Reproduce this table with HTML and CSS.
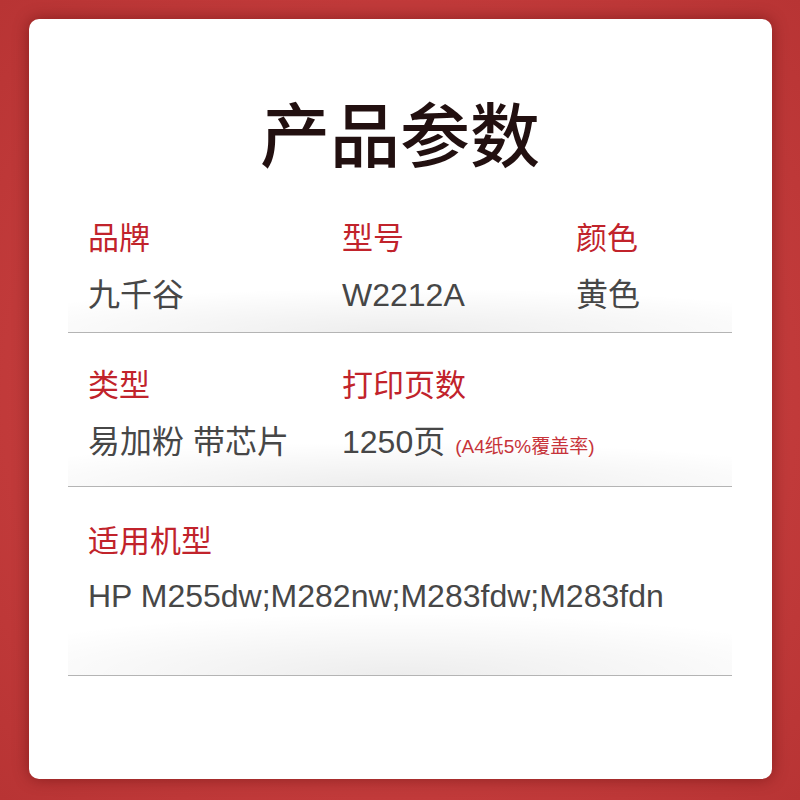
FILE: index.html
```html
<!DOCTYPE html>
<html lang="zh-CN">

<head>
	<meta charset="UTF-8">
	<meta name="viewport" content="width=device-width, initial-scale=1.0">
	<title>产品参数</title>
	<link rel="stylesheet" href="styles.css">
</head>

<body>
	<div class="page">
		<div class="card">
			<h1 class="title">产品参数</h1>

			<div class="spec-row row-1">
				<div class="cell">
					<div class="label">品牌</div>
					<div class="value">九千谷</div>
				</div>
				<div class="cell">
					<div class="label">型号</div>
					<div class="value">W2212A</div>
				</div>
				<div class="cell">
					<div class="label">颜色</div>
					<div class="value">黄色</div>
				</div>
			</div>

			<div class="spec-row row-2">
				<div class="cell">
					<div class="label">类型</div>
					<div class="value">易加粉 带芯片</div>
				</div>
				<div class="cell wide">
					<div class="label">打印页数</div>
					<div class="value">1250页<span class="note">(A4纸5%覆盖率)</span></div>
				</div>
			</div>

			<div class="spec-row row-3">
				<div class="cell full">
					<div class="label">适用机型</div>
					<div class="value">HP M255dw;M282nw;M283fdw;M283fdn</div>
				</div>
			</div>
		</div>
	</div>
</body>

</html>
```

FILE: styles.css
```css
* {
	margin: 0;
	padding: 0;
	box-sizing: border-box;
}

body {
	background-color: #c0393a;
	font-family: "Liberation Sans", "Noto Sans CJK SC", sans-serif;
}

.page {
	width: 800px;
	height: 800px;
	padding: 19px 28px 21px 29px;
	background: radial-gradient(ellipse at 50% 50%, #c43c3c 60%, #b83434 100%);
}

.card {
	height: 760px;
	padding: 78px 40px 0 39px;
	background-color: #fff;
	border-radius: 10px;
	box-shadow: 0 0 16px rgba(70, 0, 0, 0.45);
}

.title {
	font-family: "Noto Sans CJK SC", sans-serif;
	font-size: 70px;
	line-height: 70px;
	font-weight: 500;
	color: #221010;
	text-align: center;
	margin-bottom: 56px;
}

.spec-row {
	position: relative;
	display: grid;
	grid-template-columns: 254px 234px 1fr;
	padding: 0 20px;
	border-bottom: 1px solid #b4b4b4;
}

/* soft shadow sitting on each line */
.spec-row::before {
	content: "";
	position: absolute;
	left: 0;
	right: 0;
	bottom: 0;
	height: 44px;
	background: radial-gradient(ellipse 70% 100% at 50% 100%, rgba(0, 0, 0, 0.07), rgba(0, 0, 0, 0) 100%);
	pointer-events: none;
}

.row-1 {
	padding-bottom: 21px;
}

.row-2 {
	padding-top: 37px;
	padding-bottom: 28px;
}

.row-3 {
	padding-top: 39px;
	padding-bottom: 63px;
}

.row-3::before {
	height: 62px;
}

.row-3 .value {
	margin-top: 23px;
}

.cell.wide {
	grid-column: span 2;
}

.cell.full {
	grid-column: 1 / -1;
}

.label {
	font-size: 31px;
	line-height: 31px;
	color: #c1232b;
}

.value {
	height: 32px;
	margin-top: 25px;
	font-size: 32px;
	line-height: 32px;
	color: #474747;
	white-space: nowrap;
}

.note {
	margin-left: 10px;
	font-size: 19px;
	color: #c8343a;
}
```
